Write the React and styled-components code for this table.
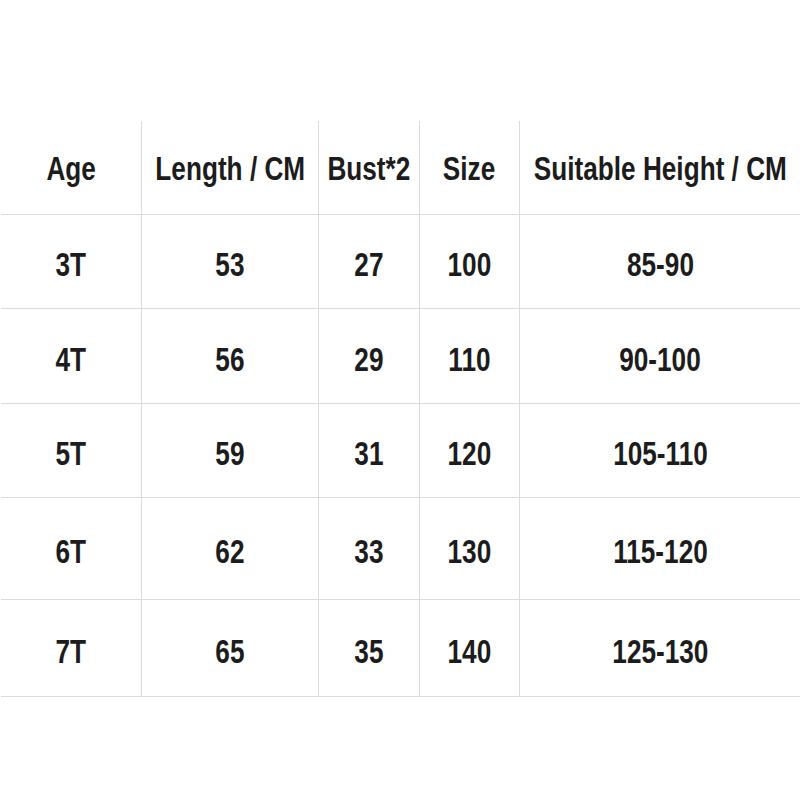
import React from 'react';
import styled, {createGlobalStyle} from 'styled-components';

const GlobalStyle = createGlobalStyle`
    body {
        margin: 0;
        background: #ffffff;
        font-family: "Liberation Sans", Arial, sans-serif;
    }
`;

const Page = styled.div`
    width: 800px;
    height: 800px;
    padding-top: 121px;
    padding-left: 1px;
    box-sizing: border-box;
`;

const Table = styled.div`
    display: grid;
    grid-template-columns: 141px 177px 101px 100px 1fr;
    grid-template-rows: 94px 94px 95px 94px 102px 97px;
`;

const Cell = styled.div`
    display: flex;
    align-items: center;
    justify-content: center;
    border-bottom: 1px solid #dcdcdc;
    border-right: ${({$last}) => ($last ? 'none' : '1px solid #dcdcdc')};
    padding-top: ${({$head}) => ($head ? '2px' : '6px')};
    box-sizing: border-box;
    min-width: 0;
`;

// narrow bold face, squeezed from Liberation Sans
const Text = styled.span`
    display: inline-block;
    color: #1c1c1c;
    font-weight: bold;
    font-size: 34px;
    white-space: nowrap;
    transform: scaleX(0.77);
`;

const headers = ['Age', 'Length / CM', 'Bust*2', 'Size', 'Suitable Height / CM'];

const rows = [
    ['3T', '53', '27', '100', '85-90'],
    ['4T', '56', '29', '110', '90-100'],
    ['5T', '59', '31', '120', '105-110'],
    ['6T', '62', '33', '130', '115-120'],
    ['7T', '65', '35', '140', '125-130'],
];

export default function App() {
    return (
        <Page>
            <GlobalStyle />
            <Table>
                {headers.map((h, i) => (
                    <Cell key={h} $head $last={i === headers.length - 1}>
                        <Text>{h}</Text>
                    </Cell>
                ))}
                {rows.map((row) =>
                    row.map((v, i) => (
                        <Cell key={row[0] + i} $last={i === row.length - 1}>
                            <Text>{v}</Text>
                        </Cell>
                    ))
                )}
            </Table>
        </Page>
    );
}
